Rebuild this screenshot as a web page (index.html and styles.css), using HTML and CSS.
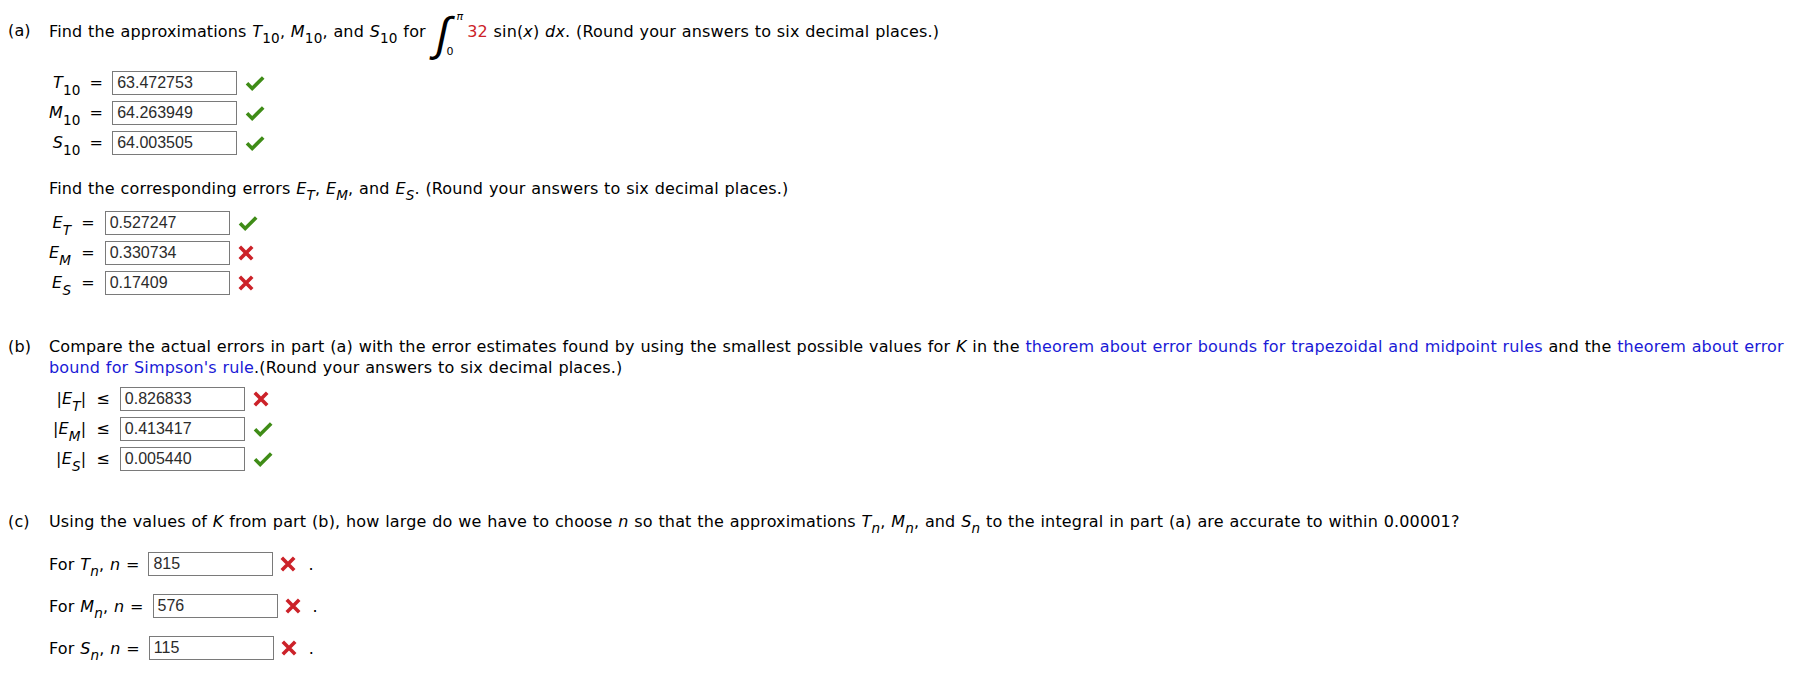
FILE: index.html
```html
<!DOCTYPE html>
<html lang="en">
<head>
    <meta charset="UTF-8">
    <title>Numerical Integration - Error Bounds</title>
    <link rel="stylesheet" href="styles.css">
</head>
<body>
    <!-- Part (a) -->
    <div class="part part-a">
        <div class="part-label">(a)</div>
        <div class="part-body">
            <p class="prompt first">Find the approximations <i>T</i><sub>10</sub>, <i>M</i><sub>10</sub>, and <i>S</i><sub>10</sub> for <span class="integral"><span class="int-sign">&#8747;</span><span class="limits"><span class="upper">&pi;</span><span class="lower">0</span></span></span><span class="coef">32</span> sin(<i>x</i>) <i>dx</i>. (Round your answers to six decimal places.)</p>

            <div class="answers approx">
                <span class="lbl"><i>T</i><sub>10</sub></span><span class="rel">=</span><span class="box">63.472753</span>
                <svg class="mark ok" viewBox="0 0 20 16"><path d="M2 8.2l5.2 5.2L18.2 2.4"/></svg>

                <span class="lbl"><i>M</i><sub>10</sub></span><span class="rel">=</span><span class="box">64.263949</span>
                <svg class="mark ok" viewBox="0 0 20 16"><path d="M2 8.2l5.2 5.2L18.2 2.4"/></svg>

                <span class="lbl"><i>S</i><sub>10</sub></span><span class="rel">=</span><span class="box">64.003505</span>
                <svg class="mark ok" viewBox="0 0 20 16"><path d="M2 8.2l5.2 5.2L18.2 2.4"/></svg>
            </div>

            <p class="prompt sub-prompt">Find the corresponding errors <i>E</i><sub><i>T</i></sub>, <i>E</i><sub><i>M</i></sub>, and <i>E</i><sub><i>S</i></sub>. (Round your answers to six decimal places.)</p>

            <div class="answers errors">
                <span class="lbl"><i>E</i><sub><i>T</i></sub></span><span class="rel">=</span><span class="box">0.527247</span>
                <svg class="mark ok" viewBox="0 0 20 16"><path d="M2 8.2l5.2 5.2L18.2 2.4"/></svg>

                <span class="lbl"><i>E</i><sub><i>M</i></sub></span><span class="rel">=</span><span class="box">0.330734</span>
                <svg class="mark bad" viewBox="0 0 16 16"><path d="M1.8 1.8l12.4 12.4M14.2 1.8L1.8 14.2"/></svg>

                <span class="lbl"><i>E</i><sub><i>S</i></sub></span><span class="rel">=</span><span class="box">0.17409</span>
                <svg class="mark bad" viewBox="0 0 16 16"><path d="M1.8 1.8l12.4 12.4M14.2 1.8L1.8 14.2"/></svg>
            </div>
        </div>
    </div>

    <!-- Part (b) -->
    <div class="part part-b">
        <div class="part-label">(b)</div>
        <div class="part-body">
            <p class="prompt">Compare the actual errors in part (a) with the error estimates found by using the smallest possible values for <i>K</i> in the <a href="#">theorem about error bounds for trapezoidal and midpoint rules</a> and the <a href="#">theorem about error</a> <a href="#">bound for Simpson's rule</a>.(Round your answers to six decimal places.)</p>

            <div class="answers bounds">
                <span class="lbl">|<i>E</i><sub><i>T</i></sub>|</span><span class="rel">&le;</span><span class="box">0.826833</span>
                <svg class="mark bad" viewBox="0 0 16 16"><path d="M1.8 1.8l12.4 12.4M14.2 1.8L1.8 14.2"/></svg>

                <span class="lbl">|<i>E</i><sub><i>M</i></sub>|</span><span class="rel">&le;</span><span class="box">0.413417</span>
                <svg class="mark ok" viewBox="0 0 20 16"><path d="M2 8.2l5.2 5.2L18.2 2.4"/></svg>

                <span class="lbl">|<i>E</i><sub><i>S</i></sub>|</span><span class="rel">&le;</span><span class="box">0.005440</span>
                <svg class="mark ok" viewBox="0 0 20 16"><path d="M2 8.2l5.2 5.2L18.2 2.4"/></svg>
            </div>
        </div>
    </div>

    <!-- Part (c) -->
    <div class="part part-c">
        <div class="part-label">(c)</div>
        <div class="part-body">
            <p class="prompt">Using the values of <i>K</i> from part (b), how large do we have to choose <i>n</i> so that the approximations <i>T</i><sub><i>n</i></sub>, <i>M</i><sub><i>n</i></sub>, and <i>S</i><sub><i>n</i></sub> to the integral in part (a) are accurate to within 0.00001?</p>

            <div class="n-rows">
                <div class="n-row">
                    <span class="n-text">For <i>T</i><sub><i>n</i></sub>, <i>n</i> =</span><span class="box">815</span>
                    <svg class="mark bad" viewBox="0 0 16 16"><path d="M1.8 1.8l12.4 12.4M14.2 1.8L1.8 14.2"/></svg>
                    <span class="period">.</span>
                </div>
                <div class="n-row">
                    <span class="n-text">For <i>M</i><sub><i>n</i></sub>, <i>n</i> =</span><span class="box">576</span>
                    <svg class="mark bad" viewBox="0 0 16 16"><path d="M1.8 1.8l12.4 12.4M14.2 1.8L1.8 14.2"/></svg>
                    <span class="period">.</span>
                </div>
                <div class="n-row">
                    <span class="n-text">For <i>S</i><sub><i>n</i></sub>, <i>n</i> =</span><span class="box">115</span>
                    <svg class="mark bad" viewBox="0 0 16 16"><path d="M1.8 1.8l12.4 12.4M14.2 1.8L1.8 14.2"/></svg>
                    <span class="period">.</span>
                </div>
            </div>
        </div>
    </div>
</body>
</html>
```

FILE: styles.css
```css
/* General */
body {
    margin: 0;
    padding: 6px 8px 0;
    font-family: "DejaVu Sans", Verdana, sans-serif;
    font-size: 16px;
    letter-spacing: 0.15px;
    word-spacing: 0.5px;
    color: #000;
    background: #fff;
}

p {
    margin: 0;
}

a {
    color: #1a1ad6;
    text-decoration: none;
}

i {
    font-style: italic;
}

sub {
    font-size: 0.85em;
    line-height: 0;
    vertical-align: -0.45em;
}

/* Parts */
.part {
    display: grid;
    grid-template-columns: 41px 1fr;
}

.part-label {
    line-height: 21px;
}

.part-a .part-label {
    padding-top: 14px;
}

.part-b {
    margin-top: 41px;
}

.part-c {
    margin-top: 40px;
}

.prompt {
    line-height: 21px;
}

.prompt.first {
    line-height: 18px;
}

.sub-prompt {
    margin-top: 23px;
}

/* Integral */
.integral {
    display: inline-flex;
    vertical-align: middle;
    height: 48px;
    margin: 4px 2px 0 5px;
}

.int-sign {
    display: inline-block;
    width: 10px;
    font-family: "Liberation Sans", sans-serif;
    font-size: 44px;
    line-height: 48px;
    transform: skewX(-12deg) scaleY(1.06);
}

.limits {
    display: flex;
    flex-direction: column;
    justify-content: space-between;
    font-size: 11px;
    line-height: 12px;
    letter-spacing: 0;
    padding: 1px 0 0;
}

.limits .upper {
    margin-left: 10px;
    font-style: italic;
}

.coef {
    margin-left: 2px;
    color: #cc2229;
}

/* Answer tables */
.answers {
    display: grid;
    grid-template-columns: auto auto auto auto;
    grid-auto-rows: 24px;
    row-gap: 6px;
    justify-content: start;
    align-items: center;
}

.approx {
    margin-top: 13px;
}

.errors {
    margin-top: 12px;
}

.bounds {
    margin-top: 9px;
}

.lbl {
    text-align: right;
    line-height: 16px;
    white-space: nowrap;
}

.lbl sub {
    vertical-align: -0.55em;
}

.rel {
    padding: 0 9px;
    line-height: 16px;
}

.errors .rel {
    padding: 0 10px;
}

.bounds .lbl {
    padding-left: 4px;
}

.bounds .rel {
    padding: 0 10px;
}

.box {
    box-sizing: border-box;
    width: 125px;
    height: 24px;
    padding: 0 4px;
    border: 1px solid #7a7a7a;
    font-family: "Liberation Sans", Arial, sans-serif;
    font-size: 16px;
    letter-spacing: 0;
    line-height: 22px;
    color: #2b2b2b;
    background: #fff;
}

/* Marks */
.mark {
    margin-left: 8px;
    fill: none;
    stroke-width: 3.6;
}

.mark.ok {
    width: 20px;
    height: 16px;
    stroke: #3f8c17;
}

.mark.bad {
    width: 16px;
    height: 16px;
    stroke: #cc2229;
}

/* Part (c) rows */
.n-rows {
    display: flex;
    flex-direction: column;
    gap: 18px;
    margin-top: 20px;
}

.n-row {
    display: flex;
    align-items: center;
    height: 24px;
}

.n-text {
    line-height: 21px;
    white-space: nowrap;
}

.n-row .box {
    margin-left: 9px;
}

.n-row .mark {
    margin-left: 7px;
}

.period {
    margin-left: 12px;
    line-height: 21px;
}
```
